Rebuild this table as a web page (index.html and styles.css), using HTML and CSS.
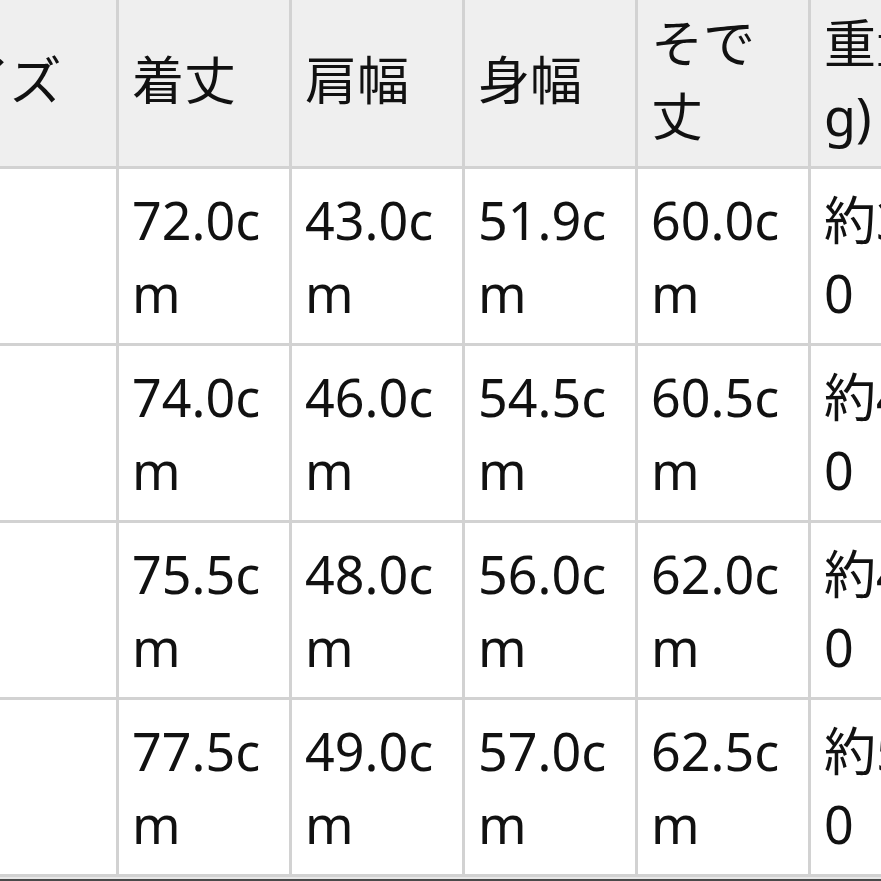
FILE: index.html
```html
<!DOCTYPE html>
<html lang="ja">
<head>
<meta charset="utf-8">
<link rel="stylesheet" href="styles.css">
</head>
<body>
<div class="page">
  <table class="size-table">
    <colgroup>
      <col class="c-size">
      <col class="c-val">
      <col class="c-val">
      <col class="c-val">
      <col class="c-val">
      <col class="c-weight">
    </colgroup>
    <thead>
      <tr>
        <th>サイズ</th>
        <th>着丈</th>
        <th>肩幅</th>
        <th>身幅</th>
        <th>そで丈</th>
        <th>重量(g)</th>
      </tr>
    </thead>
    <tbody>
      <tr><td>S</td><td>72.0cm</td><td>43.0cm</td><td>51.9cm</td><td>60.0cm</td><td>約380</td></tr>
      <tr><td>M</td><td>74.0cm</td><td>46.0cm</td><td>54.5cm</td><td>60.5cm</td><td>約420</td></tr>
      <tr><td>L</td><td>75.5cm</td><td>48.0cm</td><td>56.0cm</td><td>62.0cm</td><td>約460</td></tr>
      <tr><td>XL</td><td>77.5cm</td><td>49.0cm</td><td>57.0cm</td><td>62.5cm</td><td>約500</td></tr>
    </tbody>
  </table>
  <div class="bottom-edge"></div>
</div>
</body>
</html>
```

FILE: styles.css
```css
html, body {
  margin: 0;
  padding: 0;
  background: #ffffff;
  overflow: hidden;
}

.page {
  width: 881px;
  height: 881px;
  overflow: hidden;
  display: flex;
  flex-direction: column;
}

.size-table {
  flex: none;
  table-layout: fixed;
  border-collapse: separate;
  border-spacing: 3px;
  background: #d2d2d2;
  margin: -11px 0 0 -109px;
  width: 1079px;
  font-family: "Noto Sans", "Noto Sans CJK JP", sans-serif;
  font-size: 52px;
  line-height: 73px;
  color: #111111;
}

.c-size { width: 222px; }
.c-val { width: 170px; }
.c-weight { width: 156px; }

.size-table th,
.size-table td {
  padding: 14px 13px;
  text-align: left;
  vertical-align: middle;
  font-weight: normal;
  word-break: break-all;
  line-break: anywhere;
  overflow: hidden;
}

.size-table th {
  background: #efefef;
}

.size-table td {
  background: #ffffff;
}

.bottom-edge {
  flex: none;
  height: 2px;
  background: #e8e8e8;
  border-bottom: 3px solid #4a4a4a;
}
```
